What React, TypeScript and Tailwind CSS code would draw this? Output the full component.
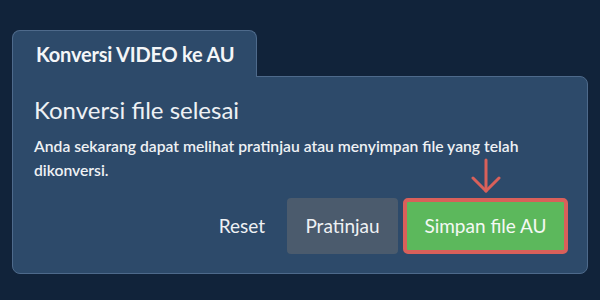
export default function App() {
  return (
    <div
      className="w-[600px] h-[300px] bg-[#11233a] pl-[12px] pt-[30px]"
      style={{ fontFamily: "Lato, 'Noto Sans', sans-serif" }}
    >
      <div className="relative z-10 -mb-px w-[245px] h-[47px] bg-[#2d4a6a] border border-b-0 border-[#4e6a8b] rounded-t-[8px] pl-[23px] flex items-center">
        <span className="text-[20px] font-bold text-[#f4f6f8] tracking-[-0.2px]">Konversi VIDEO ke AU</span>
      </div>
      <div className="w-[576px] bg-[#2d4a6a] border border-[#4e6a8b] rounded-b-[8px] rounded-tr-[8px] pl-[21px] pr-[19px] pt-[17px] pb-[19px]">
        <h1 className="text-[24px] leading-[32px] text-[#eef1f4]">Konversi file selesai</h1>
        <p className="mt-[8px] text-[15.7px] leading-[24px] font-semibold text-[#eef1f4]">
          Anda sekarang dapat melihat pratinjau atau menyimpan file yang telah dikonversi.
        </p>
        <div className="mt-[16px] flex justify-end items-center">
          <button className="text-[19px] text-[#eef1f4] mr-[22px]">Reset</button>
          <button className="w-[111px] h-[56px] rounded-[4px] bg-[#4b5b6d] text-[19px] text-[#eef1f4]">
            Pratinjau
          </button>
          <div className="relative ml-[5px]">
            <svg
              className="absolute left-1/2 -translate-x-1/2 bottom-full mb-[4px]"
              width="30"
              height="36"
              viewBox="0 0 30 36"
              fill="none"
              stroke="#d9605a"
              strokeWidth="3"
              strokeLinecap="round"
              strokeLinejoin="round"
            >
              <line x1="15" y1="2" x2="15" y2="33" />
              <polyline points="2,20 15,33 28,20" />
            </svg>
            <button className="w-[165px] h-[56px] rounded-[5px] border-[4px] border-[#d9605a] bg-[#5cb85c] text-[19px] text-[#f4f8f4]">
              Simpan file AU
            </button>
          </div>
        </div>
      </div>
    </div>
  );
}
